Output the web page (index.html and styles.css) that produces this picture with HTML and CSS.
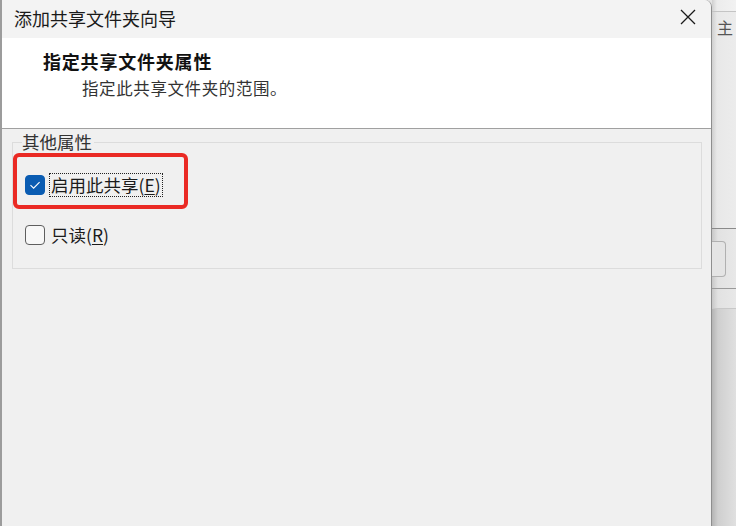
FILE: index.html
```html
<!DOCTYPE html>
<html lang="zh-CN">
<head>
<meta charset="utf-8">
<title>添加共享文件夹向导</title>
<link rel="stylesheet" href="styles.css">
</head>
<body>
<div class="screen">
  <div class="dialog">
    <div class="titlebar">
      <span class="title">添加共享文件夹向导</span>
      <span class="close">
        <svg width="16" height="16" viewBox="0 0 16 16"><path d="M1 1 L15 15 M15 1 L1 15" stroke="#1a1a1a" stroke-width="1.3" fill="none"/></svg>
      </span>
    </div>
    <div class="header">
      <div class="h-title">指定共享文件夹属性</div>
      <div class="h-sub">指定此共享文件夹的范围。</div>
    </div>
    <div class="body">
      <fieldset class="group">
        <legend class="legend">其他属性</legend>
        <div class="rows">
          <label class="row">
            <span class="cb checked">
              <svg width="20" height="20" viewBox="0 0 20 20"><path d="M5.5 10.2 L8.6 13.2 L14.6 7.2" stroke="#ffffff" stroke-width="1.1" fill="none"/></svg>
            </span>
            <span class="lbl focus">启用此共享(<u>E</u>)</span>
          </label>
          <label class="row">
            <span class="cb"></span>
            <span class="lbl">只读(<u>R</u>)</span>
          </label>
        </div>
      </fieldset>
    </div>
    <div class="highlight"></div>
  </div>
  <div class="behind">
    <div class="b-top"></div>
    <div class="b-main"><span class="b-text">主</span></div>
    <div class="b-field"><span class="b-input"></span></div>
    <div class="b-gap"></div>
    <div class="b-rest"></div>
  </div>
</div>
</body>
</html>
```

FILE: styles.css
```css
html, body {
  margin: 0;
  padding: 0;
}
body {
  width: 736px;
  height: 526px;
  overflow: hidden;
  background: #e4e4e4;
  font-family: "Noto Sans CJK SC", "Noto Sans", sans-serif;
  color: #1b1b1b;
}
.screen {
  display: flex;
  width: 736px;
  height: 526px;
}
.dialog {
  position: relative;
  width: 709px;
  height: 526px;
  flex: none;
  background: #f0f0f0;
  border-left: 2px solid #9c9c9c;
  border-right: 1px solid #8e8e8e;
  border-top-right-radius: 7px;
  display: flex;
  flex-direction: column;
}
.titlebar {
  height: 38px;
  flex: none;
  background: #f3f3f3;
  border-top-right-radius: 7px;
  display: flex;
  align-items: center;
  justify-content: space-between;
  padding: 0 15px 3px 12px;
  box-sizing: border-box;
}
.title {
  font-size: 18px;
  line-height: 22px;
  color: #1a1a1a;
}
.close {
  display: flex;
  width: 16px;
  height: 16px;
  margin-top: -1px;
}
.header {
  height: 91px;
  flex: none;
  background: #ffffff;
  border-bottom: 1px solid #a0a0a0;
  padding: 13px 0 0 41px;
  box-sizing: border-box;
}
.h-title {
  font-size: 18px;
  font-weight: 700;
  line-height: 20px;
  letter-spacing: 0.8px;
  color: #111;
}
.h-sub {
  margin: 7px 0 0 39px;
  font-size: 16.5px;
  line-height: 20px;
  letter-spacing: 0.6px;
  color: #333;
}
.body {
  flex: 1;
  padding: 4px 9px 0 10px;
}
.group {
  margin: 0;
  border: 1px solid #dcdcdc;
  padding: 22px 12px 21px 12px;
}
.legend {
  padding: 0 2px 0 0;
  margin-left: -3px;
  font-size: 17.5px;
  line-height: 18px;
  color: #333;
}
.rows {
  display: flex;
  flex-direction: column;
  gap: 26px;
}
.row {
  display: flex;
  align-items: center;
  height: 24px;
  gap: 4px;
}
.cb {
  width: 20px;
  height: 20px;
  box-sizing: border-box;
  border: 1px solid #5e5e5e;
  border-radius: 4px;
  background: #f7f7f7;
  display: flex;
}
.cb.checked {
  background: #0a5cb2;
  border-color: #0a5cb2;
}
.cb.checked svg {
  margin: -1px;
}
.lbl {
  font-size: 17.5px;
  line-height: 22px;
  padding: 0 1px;
  border: 1px solid transparent;
  color: #1b1b1b;
}
.lbl.focus {
  border: 1px dotted #222;
}
.lbl u {
  text-underline-offset: 2px;
}
.highlight {
  position: absolute;
  left: 11px;
  top: 153px;
  width: 175px;
  height: 56px;
  box-sizing: border-box;
  border: 4px solid #ea2a24;
  border-radius: 6px;
}
.behind {
  flex: 1;
  display: flex;
  flex-direction: column;
  background: linear-gradient(to right, #b8b8b8 0px, #d8d8d8 6px, #e6e6e6 100%);
}
.b-top {
  height: 11px;
  background: linear-gradient(to right, #d0d0d0 0px, #ececec 5px, #f2f2f2 100%);
  border-bottom: 1px solid #c4c4c4;
}
.b-main {
  height: 216px;
  border-bottom: 1px solid #8a8a8a;
  background: linear-gradient(to right, #cfcfcf 0px, #e8e8e8 5px, #ececec 100%);
  overflow: hidden;
}
.b-text {
  display: block;
  margin: 6px 0 0 5px;
  font-size: 16px;
  line-height: 18px;
  color: #555;
  white-space: nowrap;
}
.b-field {
  height: 47px;
  border-bottom: 1px solid #9a9a9a;
  background: linear-gradient(to right, #c8c8c8 0px, #e2e2e2 6px, #e8e8e8 100%);
  padding-top: 12px;
  box-sizing: content-box;
  display: flex;
}
.b-input {
  width: 13px;
  height: 34px;
  border: 1px solid #b0b0b0;
  border-left: none;
  border-radius: 0 4px 4px 0;
  background: #e4e4e4;
}
.b-gap {
  height: 19px;
  border-bottom: 1px solid #c8c8c8;
  background: linear-gradient(to right, #c8c8c8 0px, #e2e2e2 6px, #e8e8e8 100%);
}
.b-rest {
  flex: 1;
  background: linear-gradient(to right, #b4b4b4 0px, #cfcfcf 6px, #e0e0e0 100%);
}
```
